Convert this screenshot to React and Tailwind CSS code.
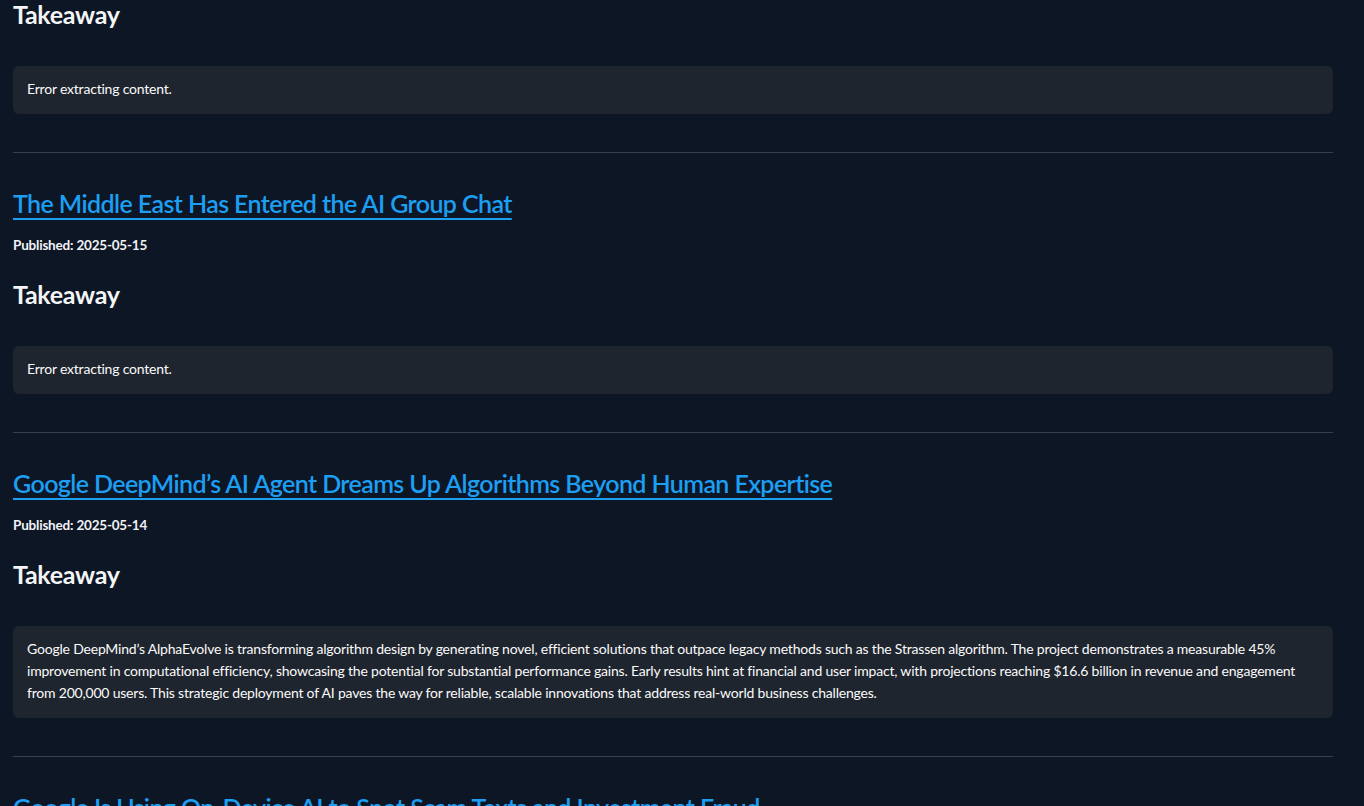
const articles = [
  {
    title: 'The Middle East Has Entered the AI Group Chat',
    published: '2025-05-15',
    takeaway: 'Error extracting content.',
  },
  {
    title: 'Google DeepMind’s AI Agent Dreams Up Algorithms Beyond Human Expertise',
    published: '2025-05-14',
    takeaway:
      'Google DeepMind’s AlphaEvolve is transforming algorithm design by generating novel, efficient solutions that outpace legacy methods such as the Strassen algorithm. The project demonstrates a measurable 45% improvement in computational efficiency, showcasing the potential for substantial performance gains. Early results hint at financial and user impact, with projections reaching $16.6 billion in revenue and engagement from 200,000 users. This strategic deployment of AI paves the way for reliable, scalable innovations that address real-world business challenges.',
  },
  {
    title: 'Google Is Using On-Device AI to Spot Scam Texts and Investment Fraud',
    published: '2025-05-14',
    takeaway: 'Error extracting content.',
  },
];

function Takeaway({ text, className }) {
  return (
    <>
      <h3 className={`text-[25px] leading-[28px] font-bold tracking-[-0.3px] text-[#f3f4f6] ${className}`}>
        Takeaway
      </h3>
      <div className="mt-[38px] rounded-md bg-[#1f252e] px-[14px] pt-[12px] pb-[14px] text-[14px] leading-[22px] tracking-[-0.2px] text-[#fafafa]">
        {text}
      </div>
    </>
  );
}

function Article({ article }) {
  return (
    <div>
      <hr className="mt-[38px] border-0 border-t border-[#3a404a]" />
      <a
        href="#"
        className="mt-[32px] block text-[25px] leading-[36px] font-semibold tracking-[-0.6px] text-[#1c9ef2] underline underline-offset-[5px] decoration-[2px]"
      >
        {article.title}
      </a>
      <p className="mt-[14px] text-[13.5px] leading-[20px] font-bold tracking-[-0.2px] text-[#f0f2f6]">
        Published: {article.published}
      </p>
      <Takeaway text={article.takeaway} className="mt-[25px]" />
    </div>
  );
}

export default function App() {
  return (
    <div
      className="h-[806px] overflow-hidden bg-[#0d1624]"
      style={{ fontFamily: '"Source Sans Pro", Lato, "Noto Sans", sans-serif' }}
    >
      <div className="ml-[13px] w-[1320px]">
        <Takeaway text="Error extracting content." className="" />
        {articles.map((a) => (
          <Article key={a.title} article={a} />
        ))}
      </div>
    </div>
  );
}
